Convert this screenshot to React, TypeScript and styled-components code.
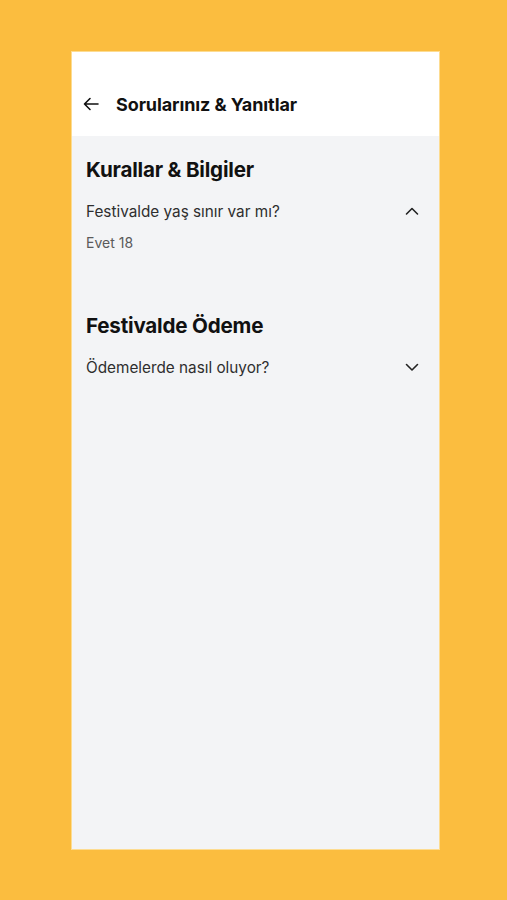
import React, { useState } from 'react'
import styled, { createGlobalStyle } from 'styled-components'

const GlobalStyle = createGlobalStyle`
  html, body {
    margin: 0;
    padding: 0;
    background: #fbbd3f;
    font-family: Inter, "Noto Sans", sans-serif;
  }
`

const Page = styled.div`
  width: 507px;
  height: 900px;
  padding: 52px 68px 51px 72px;
  box-sizing: border-box;
  display: flex;
`

const Screen = styled.div`
  flex: 1;
  display: flex;
  flex-direction: column;
  background: #f3f4f6;
  box-shadow: 0 0 0 1px rgba(255, 240, 200, 0.6);
`

const Header = styled.header`
  height: 84px;
  background: #ffffff;
  display: flex;
  align-items: center;
  padding: 20px 0 0 11px;
  box-sizing: border-box;
  gap: 17px;
`

const BackButton = styled.button`
  border: none;
  background: none;
  padding: 0;
  width: 16px;
  height: 16px;
  display: flex;
  color: #111;
`

const Title = styled.h1`
  margin: 0;
  font-size: 18px;
  font-weight: 700;
  color: #111;
  letter-spacing: -0.1px;
`

const Content = styled.main`
  padding: 21px 19px 0 14px;
  display: flex;
  flex-direction: column;
`

const Section = styled.section`
  display: flex;
  flex-direction: column;
  margin-bottom: 61px;
`

const SectionTitle = styled.h2`
  margin: 0 0 18px;
  font-size: 20.6px;
  line-height: 26px;
  font-weight: 700;
  color: #111;
  letter-spacing: -0.2px;
`

const QuestionRow = styled.button`
  border: none;
  background: none;
  padding: 0;
  display: flex;
  align-items: center;
  justify-content: space-between;
  font-family: inherit;
  font-size: 15.3px;
  color: #2e2e2e;
  text-align: left;
  height: 20px;
`

const Answer = styled.p`
  margin: 13px 0 0;
  font-size: 14px;
  line-height: 18px;
  color: #5a5a5a;
`

const Chevron = ({ up }: { up: boolean }) => (
  <svg width="16" height="14" viewBox="0 0 16 14" fill="none" stroke="#222" strokeWidth="1.6" strokeLinecap="round" strokeLinejoin="round">
    {up ? <path d="M2.5 10l5.5-5.5L13.5 10" /> : <path d="M2.5 4.5L8 10l5.5-5.5" />}
  </svg>
)

const faq = [
  { title: 'Kurallar & Bilgiler', question: 'Festivalde yaş sınır var mı?', answer: 'Evet 18', open: true },
  { title: 'Festivalde Ödeme', question: 'Ödemelerde nasıl oluyor?', answer: '', open: false },
]

const FaqSection = ({ title, question, answer, open }: typeof faq[number]) => {
  const [isOpen, setOpen] = useState(open)
  return (
    <Section>
      <SectionTitle>{title}</SectionTitle>
      <QuestionRow onClick={() => setOpen(!isOpen)}>
        {question}
        <Chevron up={isOpen} />
      </QuestionRow>
      {isOpen && <Answer>{answer}</Answer>}
    </Section>
  )
}

export default function App() {
  return (
    <>
      <GlobalStyle />
      <Page>
        <Screen>
          <Header>
            <BackButton aria-label="Geri">
              <svg width="16" height="16" viewBox="0 0 16 16" fill="none" stroke="#111" strokeWidth="1.6" strokeLinecap="round" strokeLinejoin="round">
                <path d="M15 8H1.5M7 2.5L1.5 8 7 13.5" />
              </svg>
            </BackButton>
            <Title>Sorularınız & Yanıtlar</Title>
          </Header>
          <Content>
            {faq.map((f) => (
              <FaqSection key={f.title} {...f} />
            ))}
          </Content>
        </Screen>
      </Page>
    </>
  )
}
